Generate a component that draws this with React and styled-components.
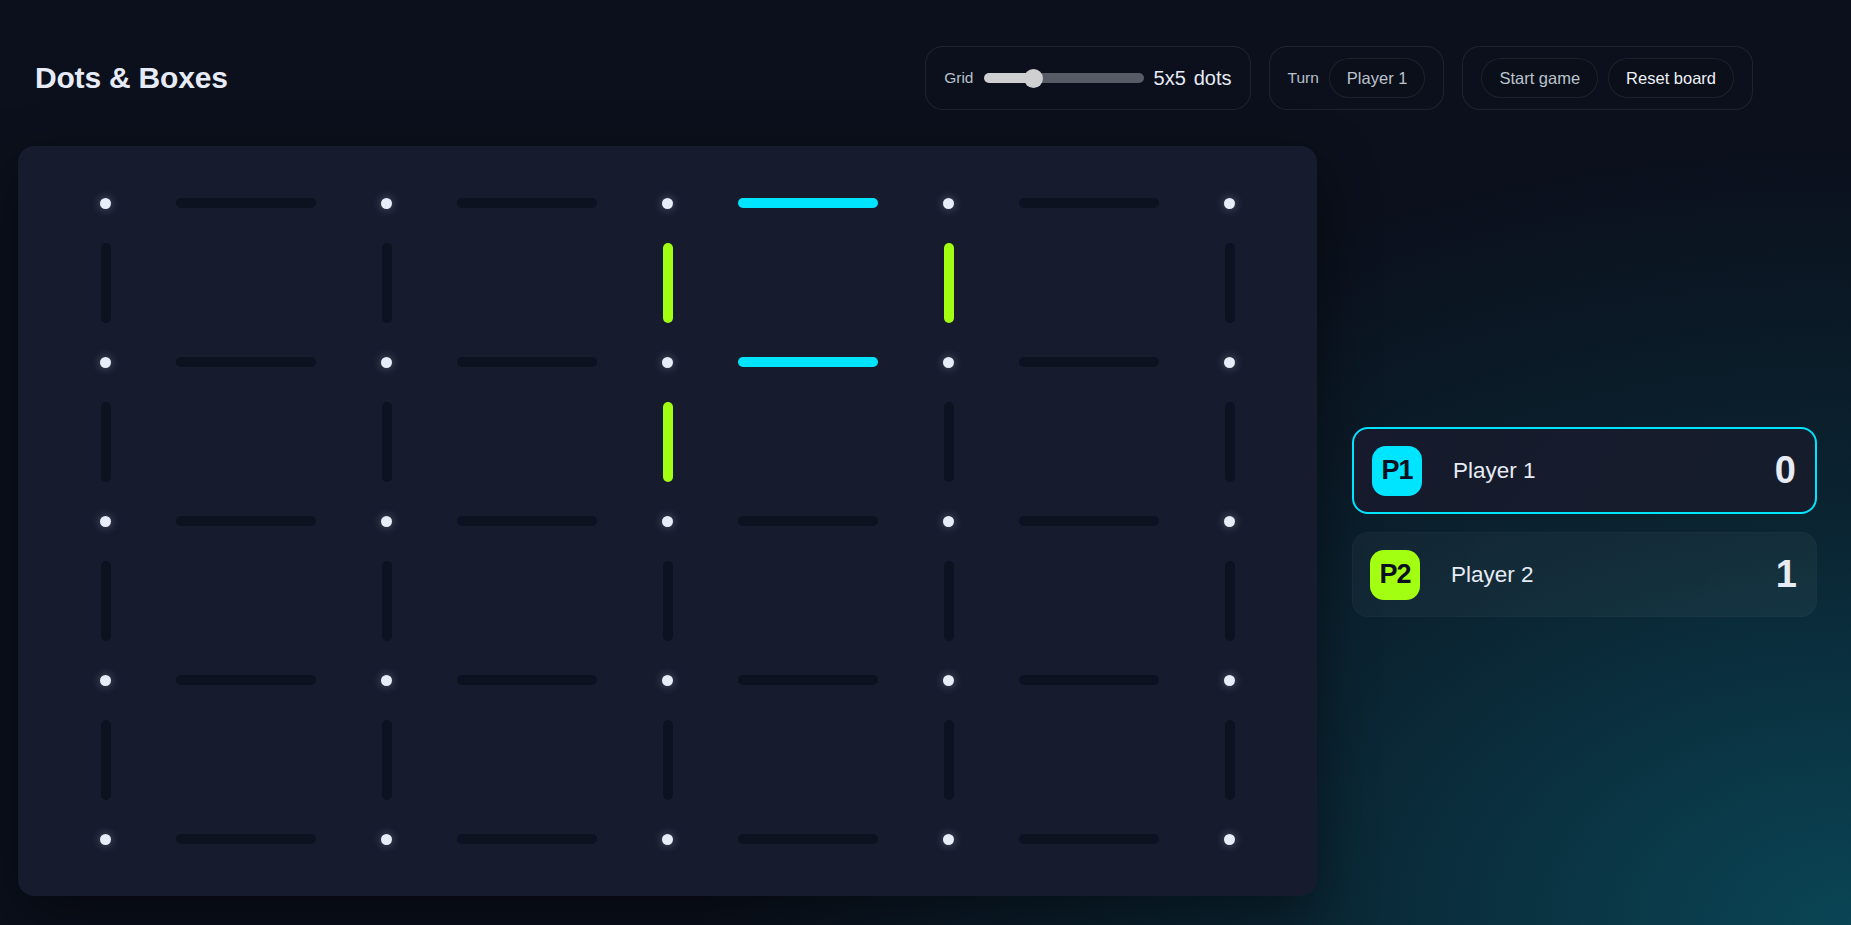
import React, { useState } from "react";
import styled, { createGlobalStyle } from "styled-components";

const GlobalStyle = createGlobalStyle`
    html, body {
        margin: 0;
        padding: 0;
        height: 100%;
    }
    body {
        font-family: "Liberation Sans", Arial, sans-serif;
        color: #e6ebf5;
        background: #0b101c;
    }
`;

const CYAN = "#00e5ff";
const LIME = "#a3ff12";

const Page = styled.div`
    width: 1851px;
    height: 925px;
    overflow: hidden;
    background:
        radial-gradient(ellipse 1150px 780px at 100% 100%, rgba(10, 72, 88, 0.95), rgba(10, 58, 74, 0.5) 50%, transparent 100%),
        #0b101c;
    display: flex;
    flex-direction: column;
`;

const Header = styled.header`
    height: 146px;
    box-sizing: border-box;
    padding: 10px 98px 0 35px;
    display: flex;
    align-items: center;
    justify-content: space-between;
`;

const Title = styled.h1`
    margin: 0;
    font-size: 30px;
    font-weight: 700;
    color: #e6ebf7;
    letter-spacing: -0.2px;
`;

const Controls = styled.div`
    display: flex;
    gap: 18px;
`;

const Group = styled.div`
    height: 64px;
    box-sizing: border-box;
    padding: 0 18px;
    display: flex;
    align-items: center;
    gap: 10px;
    border: 1px solid rgba(255, 255, 255, 0.08);
    border-radius: 18px;
    background: rgba(12, 17, 29, 0.6);
`;

const Label = styled.span`
    font-size: 15.5px;
    color: #b9c0cb;
`;

const Range = styled.input`
    -webkit-appearance: none;
    appearance: none;
    width: 160px;
    height: 10px;
    margin: 0;
    border-radius: 5px;
    outline: none;
    cursor: pointer;

    &::-webkit-slider-thumb {
        -webkit-appearance: none;
        width: 19px;
        height: 19px;
        border-radius: 50%;
        background: #cfcfd2;
        border: none;
    }
`;

const SizeText = styled.span`
    display: flex;
    gap: 8px;
    font-size: 20px;
    color: #e6ebf5;
`;

const Pill = styled.button`
    display: inline-flex;
    align-items: center;
    box-sizing: border-box;
    height: 40px;
    padding: 0 17px;
    border-radius: 20px;
    border: 1px solid rgba(255, 255, 255, 0.08);
    background: rgba(10, 14, 24, 0.5);
    font-family: inherit;
    font-size: 16.5px;
    color: ${(p) => (p.$bright ? "#eef1f7" : "#bcc3ce")};
    cursor: pointer;
`;

const Main = styled.main`
    flex: 1;
    display: grid;
    grid-template-columns: 1299px 465px;
    gap: 35px;
    padding: 0 34px 29px 18px;
    min-height: 0;
`;

const Board = styled.section`
    background: #161c2e;
    border-radius: 16px;
    box-shadow: 0 20px 60px rgba(0, 0, 0, 0.45);
    display: flex;
    align-items: center;
    justify-content: center;
`;

const Grid = styled.div`
    display: grid;
    grid-template-columns: 12px repeat(4, 269px 12px);
    grid-template-rows: 12px repeat(4, 147px 12px);
`;

const Dot = styled.div`
    width: 11px;
    height: 11px;
    border-radius: 50%;
    place-self: center;
    background: #e8eef9;
    box-shadow: 0 0 10px rgba(220, 230, 255, 0.35);
`;

const Edge = styled.div`
    place-self: center;
    width: ${(p) => (p.$vertical ? "10px" : "140px")};
    height: ${(p) => (p.$vertical ? "80px" : "10px")};
    border-radius: 5px;
    background: ${(p) => p.$color || "#0d1220"};
    cursor: pointer;
`;

const Cell = styled.div``;

const Side = styled.aside`
    display: flex;
    flex-direction: column;
    justify-content: center;
    gap: 18px;
    padding-top: 2px;
`;

const PlayerCard = styled.div`
    height: ${(p) => (p.$active ? 87 : 85)}px;
    box-sizing: border-box;
    display: flex;
    align-items: center;
    padding: 0 19px 0 ${(p) => (p.$active ? 18 : 17)}px;
    border-radius: 16px;
    border: ${(p) => (p.$active ? `2px solid ${CYAN}` : "1px solid rgba(255,255,255,0.02)")};
    background: ${(p) =>
        p.$active
            ? "linear-gradient(120deg, #161a2c, #151d2c)"
            : "linear-gradient(120deg, rgba(255,255,255,0.035), rgba(255,255,255,0.045))"};
`;

const Badge = styled.div`
    width: 50px;
    height: 50px;
    border-radius: 14px;
    background: ${(p) => p.$color};
    color: #0b1020;
    font-size: 27px;
    font-weight: 700;
    letter-spacing: -1px;
    display: flex;
    align-items: center;
    justify-content: center;
`;

const PlayerName = styled.span`
    margin-left: 31px;
    flex: 1;
    font-size: 22.5px;
    color: #e6ebf5;
`;

const Score = styled.span`
    font-size: 38px;
    font-weight: 700;
    color: #e6ebf5;
`;

const N = 5;
// key: "h-r-c" horizontal edge right of dot (r,c); "v-r-c" vertical edge below dot (r,c)
const taken = {
    "h-0-2": CYAN,
    "h-1-2": CYAN,
    "v-0-2": LIME,
    "v-0-3": LIME,
    "v-1-2": LIME,
};

function renderGrid() {
    const cells = [];
    for (let r = 0; r < N * 2 - 1; r++) {
        for (let c = 0; c < N * 2 - 1; c++) {
            const key = `${r}-${c}`;
            if (r % 2 === 0 && c % 2 === 0) {
                cells.push(<Dot key={key} />);
            } else if (r % 2 === 0) {
                cells.push(<Edge key={key} $color={taken[`h-${r / 2}-${(c - 1) / 2}`]} />);
            } else if (c % 2 === 0) {
                cells.push(<Edge key={key} $vertical $color={taken[`v-${(r - 1) / 2}-${c / 2}`]} />);
            } else {
                cells.push(<Cell key={key} />);
            }
        }
    }
    return cells;
}

export default function App() {
    const [size, setSize] = useState(5);
    const pct = ((size - 3) / 7) * 100;

    return (
        <Page>
            <GlobalStyle />
            <Header>
                <Title>Dots &amp; Boxes</Title>
                <Controls>
                    <Group>
                        <Label>Grid</Label>
                        <Range
                            type="range"
                            min={3}
                            max={10}
                            value={size}
                            onChange={(e) => setSize(Number(e.target.value))}
                            style={{
                                background: `linear-gradient(to right, #cfcfd2 ${pct}%, #565b66 ${pct}%)`,
                            }}
                        />
                        <SizeText>
                            <span>
                                {size}x{size}
                            </span>
                            <span>dots</span>
                        </SizeText>
                    </Group>
                    <Group>
                        <Label>Turn</Label>
                        <Pill as="span">Player 1</Pill>
                    </Group>
                    <Group>
                        <Pill>Start game</Pill>
                        <Pill $bright>Reset board</Pill>
                    </Group>
                </Controls>
            </Header>
            <Main>
                <Board>
                    <Grid>{renderGrid()}</Grid>
                </Board>
                <Side>
                    <PlayerCard $active>
                        <Badge $color={CYAN}>P1</Badge>
                        <PlayerName>Player 1</PlayerName>
                        <Score>0</Score>
                    </PlayerCard>
                    <PlayerCard>
                        <Badge $color={LIME}>P2</Badge>
                        <PlayerName>Player 2</PlayerName>
                        <Score>1</Score>
                    </PlayerCard>
                </Side>
            </Main>
        </Page>
    );
}
